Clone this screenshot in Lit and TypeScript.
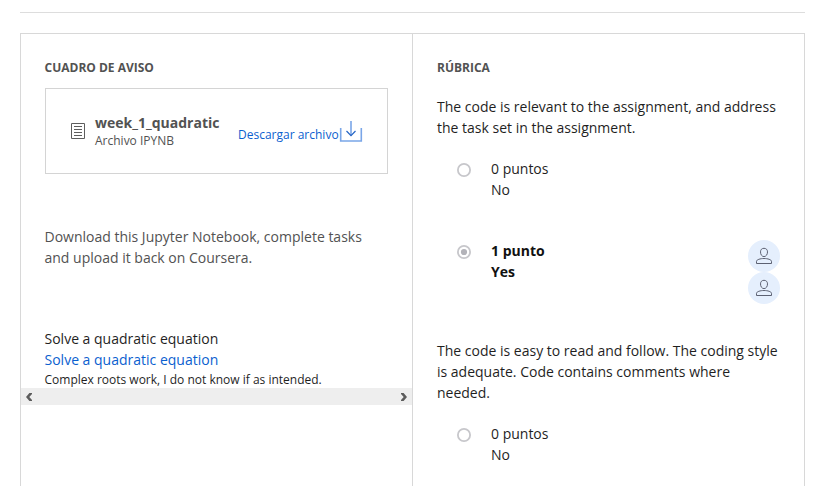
import { LitElement, html, css, svg } from "lit";
import { customElement, property } from "lit/decorators.js";

@customElement("peer-avatar")
class PeerAvatar extends LitElement {
  static styles = css`
    :host { display: block; width: 32px; height: 32px; border-radius: 50%; background: #e5effd; }
    svg { display: block; }
  `;
  render() {
    return html`<svg width="32" height="32" viewBox="0 0 32 32" fill="none" stroke="#5c6172" stroke-width="1">
      <path d="M16 8.3c2.2 0 3.5 1.4 3.5 3.6 0 2.5-1.3 4.7-3.5 4.7s-3.5-2.2-3.5-4.7c0-2.2 1.3-3.6 3.5-3.6z" />
      <path d="M8.5 23.5v-2.2c0-1.6 3.8-2.8 7.5-2.8s7.5 1.2 7.5 2.8v2.2z" />
    </svg>`;
  }
}

@customElement("rubric-option")
class RubricOption extends LitElement {
  @property() points = "";
  @property() label = "";
  @property({ type: Boolean }) checked = false;
  @property({ type: Number }) reviewers = 0;
  static styles = css`
    :host { display: flex; height: 42px; padding-left: 20px; line-height: 21px; white-space: nowrap; }
    :host([checked]) { font-weight: 700; color: #111; }
    .radio { display: block; flex: none; width: 14px; height: 14px; margin: 5px 20px 0 0; }
    .peers { margin-left: auto; }
  `;
  render() {
    return html`
      <svg class="radio" viewBox="0 0 14 14">
        <circle cx="7" cy="7" r="6.1" fill="#fff" stroke="#c7c7cb" stroke-width="1.8" />
        ${this.checked ? svg`<circle cx="7" cy="7" r="3.1" fill="#b3b3b9" />` : ""}
      </svg>
      <div><div>${this.points}</div><div>${this.label}</div></div>
      <div class="peers">${Array.from({ length: this.reviewers }, () => html`<peer-avatar></peer-avatar>`)}</div>
    `;
  }
}

@customElement("app-root")
class AppRoot extends LitElement {
  static styles = css`
    :host {
      display: block; box-sizing: border-box; height: 486px; overflow: hidden; padding: 12px 21px 0 20px;
      background: #fff; color: #1f1f1f; font: 14px/21px "Open Sans", sans-serif;
    }
    .rule { height: 1px; margin-bottom: 20px; background: #ddd; }
    .panel { display: grid; grid-template-columns: 392px 392px; height: 480px; box-sizing: border-box; border: 1px solid #d8d8d8; border-width: 1px 0 0 1px; }
    .col { box-sizing: border-box; min-width: 0; border-right: 1px solid #d8d8d8; white-space: nowrap; }
    .left { padding-top: 25px; }
    .right { padding: 25px 24px 0; }
    h2 { margin: 0; font-size: 12px; line-height: 18px; font-weight: 700; color: #525252; }
    .left > :not(.scroll) { margin-left: 23.5px; }
    .left > .file { display: flex; box-sizing: border-box; width: 343px; height: 86px; margin: 11px 0 0 24px; padding-left: 24px; border: 1px solid #d4d4d4; color: #525252; }
    .doc { width: 16px; height: 18px; margin: 33px 9px 0 0; flex: none; }
    .name { width: 143px; padding-top: 23px; }
    .name b { display: block; line-height: 21px; }
    .type { font-size: 12px; line-height: 15px; }
    .download { display: flex; padding-top: 31px; color: #0b5fcf; font-size: 12px; text-decoration: none; }
    .download span { width: 101px; padding-top: 4px; }
    .prompt { margin-top: 52px; color: #525252; }
    .answer { margin-top: 60px; }
    .link { color: #0b5fcf; }
    .comment { font-size: 12px; line-height: 20px; height: 18px; }
    .scroll { display: flex; align-items: center; justify-content: space-between; height: 17px; padding: 0 4px; background: #eee; }
    .q1 { margin-top: 19px; }
    .o1 { margin-top: 20px; }
    .o2 { margin-top: 40px; }
    .q2 { margin-top: 58px; }
    svg { display: block; }
  `;
  render() {
    return html`
      <div class="rule"></div>
      <div class="panel">
        <section class="col left">
          <h2>CUADRO DE AVISO</h2>
          <div class="file">
            <svg class="doc" viewBox="0 0 16 18" fill="none" stroke="#5e5e5e">
              <path d="M1.5 1.5h13v15h-13zM4 4.5h8M4 7.5h8M4 10.5h8M4 13.5h8" />
            </svg>
            <div class="name"><b>week_1_quadratic</b><div class="type">Archivo IPYNB</div></div>
            <a class="download"><span>Descargar archivo</span>
              <svg width="24" height="24" viewBox="0 0 24 24" fill="none">
                <path d="M1.7 8v13h20.6V8M12 1v14.5" stroke="#7aa6e8" stroke-width="1.6" />
                <path d="M7.5 11l4.5 4.7 4.5-4.7" stroke="#2464c4" stroke-width="1.2" />
              </svg>
            </a>
          </div>
          <div class="prompt">Download this Jupyter Notebook, complete tasks<br />and upload it back on Coursera.</div>
          <div class="answer">Solve a quadratic equation</div>
          <div class="link">Solve a quadratic equation</div>
          <div class="comment">Complex roots work, I do not know if as intended.</div>
          <div class="scroll">
            <svg width="8" height="10" viewBox="0 0 8 10" fill="#5c5c5c"><path d="M7 1H4.4L1 5l3.4 4H7V8L4.3 5 7 2z" /></svg>
            <svg width="8" height="10" viewBox="0 0 8 10" fill="#5c5c5c"><path d="M1 1h2.6L7 5 3.6 9H1V8l2.7-3L1 2z" /></svg>
          </div>
        </section>
        <section class="col right">
          <h2>RÚBRICA</h2>
          <div class="q1">The code is relevant to the assignment, and address<br />the task set in the assignment.</div>
          <rubric-option class="o1" points="0 puntos" label="No"></rubric-option>
          <rubric-option class="o2" points="1 punto" label="Yes" checked reviewers="2"></rubric-option>
          <div class="q2">The code is easy to read and follow. The coding style<br />is adequate. Code contains comments where<br />needed.</div>
          <rubric-option class="o1" points="0 puntos" label="No"></rubric-option>
        </section>
      </div>
    `;
  }
}
